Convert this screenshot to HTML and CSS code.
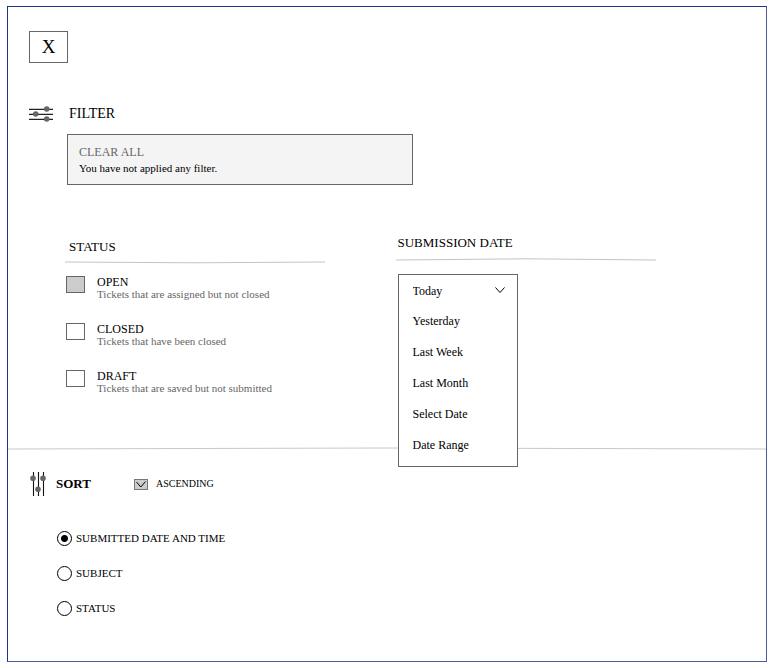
FILE: index.html
```html
<!DOCTYPE html>
<html lang="en">
<head>
<meta charset="utf-8">
<meta name="viewport" content="width=device-width, initial-scale=1">
<title>Filter and sort</title>
<link rel="stylesheet" href="styles.css">
</head>
<body>
<main class="panel">
  <section class="filter">
    <button class="close" type="button">X</button>

    <header class="filter-head">
      <svg class="icon" width="24" height="16" viewBox="0 0 24 16" aria-hidden="true">
        <path d="M0 3.4H24M0 8.4H24M0 13.4H24" stroke="#222" stroke-width="1.2"/>
        <g fill="#666"><circle cx="17.7" cy="3" r="2.8"/><circle cx="6.7" cy="8" r="2.8"/><circle cx="17.7" cy="13" r="2.8"/></g>
      </svg>
      <h1 class="title">FILTER</h1>
    </header>

    <div class="applied">
      <button class="clear" type="button">CLEAR ALL</button>
      <p class="applied-text">You have not applied any filter.</p>
    </div>

    <div class="columns">
      <fieldset class="group group-status">
        <legend class="group-title">STATUS</legend>
        <svg class="rule" height="6" viewBox="0 0 260 6" preserveAspectRatio="none" aria-hidden="true"><path d="M0 2Q130 3.6 260 2" fill="none" stroke="#c4c4c4"/></svg>
        <div class="checks">
          <label class="check"><input class="box" type="checkbox" checked><span class="check-text">OPEN<small class="note">Tickets that are assigned but not closed</small></span></label>
          <label class="check"><input class="box" type="checkbox"><span class="check-text">CLOSED<small class="note">Tickets that have been closed</small></span></label>
          <label class="check"><input class="box" type="checkbox"><span class="check-text">DRAFT<small class="note">Tickets that are saved but not submitted</small></span></label>
        </div>
      </fieldset>

      <div class="group">
        <label class="group-title" for="date">SUBMISSION DATE</label>
        <svg class="rule" height="6" viewBox="0 0 260 6" preserveAspectRatio="none" aria-hidden="true"><path d="M0 4Q130 1.6 260 4" fill="none" stroke="#c4c4c4"/></svg>
        <div class="dropdown">
          <div class="menu">
            <div class="current">
              <select class="row" id="date"><option>Today</option></select>
              <svg class="chevron" width="10" height="8" viewBox="0 0 10 8" aria-hidden="true"><path d="M.5 1.5L5 6.5L9.5 1.5" fill="none" stroke="#000"/></svg>
            </div>
            <button class="row" type="button">Yesterday</button>
            <button class="row" type="button">Last Week</button>
            <button class="row" type="button">Last Month</button>
            <button class="row" type="button">Select Date</button>
            <button class="row" type="button">Date Range</button>
          </div>
        </div>
      </div>
    </div>
  </section>

  <svg class="divider" height="4" viewBox="0 0 758 4" preserveAspectRatio="none" aria-hidden="true"><path d="M0 3Q379 1 758 3" fill="none" stroke="#c8c8c8"/></svg>

  <section class="sort">
    <header class="sort-head">
      <svg class="icon" width="16" height="24" viewBox="0 0 16 24" aria-hidden="true">
        <path d="M3.5 0V24M8.5 0V24M13.5 0V24" stroke="#111" stroke-width="1.1"/>
        <g fill="#666"><circle cx="3" cy="6.2" r="2.8"/><circle cx="8" cy="17.2" r="2.8"/><circle cx="13" cy="6.2" r="2.8"/></g>
      </svg>
      <h2 class="sort-title">SORT</h2>
      <label class="order">
        <span class="order-mark">
          <input class="order-box" type="checkbox" checked>
          <svg class="order-tick" width="14" height="11" viewBox="0 0 14 11" aria-hidden="true"><path d="M2.5 3L6.8 8L11.5 2.5" fill="none" stroke="#000"/></svg>
        </span>
        ASCENDING
      </label>
    </header>
    <div class="radios">
      <label class="radio"><input class="dot" type="radio" name="sort" checked>SUBMITTED DATE AND TIME</label>
      <label class="radio"><input class="dot" type="radio" name="sort">SUBJECT</label>
      <label class="radio"><input class="dot" type="radio" name="sort">STATUS</label>
    </div>
  </section>
</main>
</body>
</html>
```
FILE: styles.css
```css
* {
  box-sizing: border-box;
}

body {
  margin: 0;
  padding: 6px 6px 6px 7px;
  min-height: 100vh;
  display: flex;
  background: #fff;
  color: #000;
  font: 12px/16px "Liberation Serif", "Times New Roman", serif;
}

h1, h2, p {
  margin: 0;
}

button, select {
  font: inherit;
  color: inherit;
  background: none;
  border: 0;
  padding: 0;
  text-align: left;
}

input {
  appearance: none;
  margin: 0;
  flex: none;
}

svg {
  display: block;
}

.panel {
  flex: 1;
  min-width: 0;
  border: 1px solid #1b3388;
  border-right-color: #4a5c9a;
  border-bottom-color: #4a5c9a;
}

.filter {
  padding: 24px 40px 0 21px;
}

.close {
  display: block;
  width: 39px;
  height: 32px;
  border: 1px solid #666;
  font-size: 19px;
  text-align: center;
}

.filter-head {
  display: flex;
  gap: 16px;
  margin-top: 43px;
}

.title {
  font-size: 14px;
  font-weight: 400;
}

.applied {
  max-width: 346px;
  margin: 12px 0 0 38px;
  padding: 9px 11px 8px;
  border: 1px solid #666;
  background: #f4f4f4;
}

.clear {
  display: block;
  color: #666;
}

.applied-text {
  font-size: 11px;
}

.columns {
  display: grid;
  grid-template-columns: 1fr 1fr;
  margin: 50px 0 0 36px;
}

.group {
  min-width: 0;
  margin: 0;
  padding: 0;
  border: 0;
}

.group-status {
  margin-top: 4px;
}

.group-title {
  display: block;
  padding: 0 2px;
  margin-bottom: 5px;
  font-size: 13px;
}

.group-status .group-title {
  padding: 0 4px;
}

.rule {
  width: 100%;
  max-width: 260px;
}

.checks {
  display: grid;
  gap: 23px;
  margin: 10px 0 0 1px;
}

.check {
  display: flex;
  align-items: flex-start;
  gap: 12px;
  line-height: 12px;
}

.box {
  width: 19px;
  height: 17px;
  border: 1px solid #666;
}

.box:checked {
  background: #ccc;
}

.note {
  display: block;
  font-size: 11px;
  color: #666;
}

.dropdown {
  position: relative;
}

.menu {
  position: absolute;
  top: 12px;
  left: 2px;
  width: 120px;
  padding: 1px 0 6px;
  border: 1px solid #666;
  background: #fff;
}

.current {
  position: relative;
}

.row {
  appearance: none;
  display: block;
  width: 100%;
  height: 31px;
  padding: 0 14px;
}

.current .row {
  height: 29px;
}

.chevron {
  position: absolute;
  top: 10px;
  right: 12px;
  pointer-events: none;
}

.divider {
  width: 100%;
  margin-top: 52px;
}

.sort {
  padding: 22px 22px 43px;
}

.sort-head {
  display: flex;
  align-items: center;
  gap: 10px;
}

.sort-title {
  font-size: 13px;
}

.order {
  display: flex;
  align-items: center;
  gap: 8px;
  margin-left: 33px;
  font-size: 10px;
}

.order-mark {
  position: relative;
}

.order-box {
  display: block;
  width: 14px;
  height: 11px;
  border: 1px solid #777;
  background: #ccc;
}

.order-tick {
  position: absolute;
  top: 0;
  left: 0;
  pointer-events: none;
}

.radios {
  display: grid;
  gap: 19px;
  margin: 34px 0 0 27px;
}

.radio {
  display: flex;
  align-items: center;
  gap: 4px;
  font-size: 11px;
}

.dot {
  width: 15px;
  height: 15px;
  border: 1px solid #000;
  border-radius: 50%;
}

.dot:checked {
  background: radial-gradient(circle, #000 3px, transparent 4px);
}
```
